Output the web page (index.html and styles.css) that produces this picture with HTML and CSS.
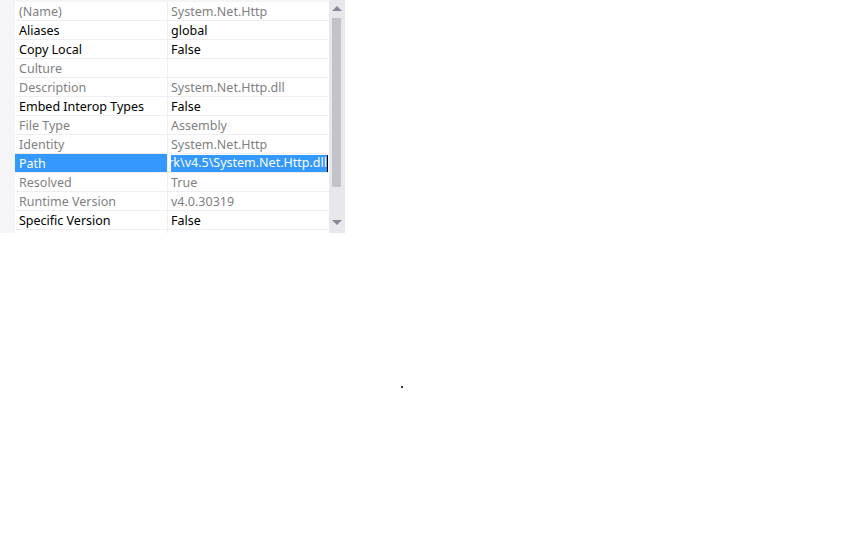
FILE: index.html
```html
<!DOCTYPE html>
<html lang="en">

<head>
    <meta charset="UTF-8">
    <title>Properties</title>
    <link rel="stylesheet" href="styles.css">
</head>

<body>
    <!-- Окно свойств ссылки -->
    <div class="panel">
        <div class="grid">
            <div class="row readonly"><div class="name">(Name)</div><div class="value">System.Net.Http</div></div>
            <div class="row"><div class="name">Aliases</div><div class="value">global</div></div>
            <div class="row"><div class="name">Copy Local</div><div class="value">False</div></div>
            <div class="row readonly"><div class="name">Culture</div><div class="value"></div></div>
            <div class="row readonly"><div class="name">Description</div><div class="value">System.Net.Http.dll</div></div>
            <div class="row"><div class="name">Embed Interop Types</div><div class="value">False</div></div>
            <div class="row readonly"><div class="name">File Type</div><div class="value">Assembly</div></div>
            <div class="row readonly"><div class="name">Identity</div><div class="value">System.Net.Http</div></div>
            <div class="row selected">
                <div class="name">Path</div>
                <div class="value editing">
                    <div class="clip"><span class="sel">Framework\v4.5\System.Net.Http.dll</span></div>
                </div>
            </div>
            <div class="row readonly"><div class="name">Resolved</div><div class="value">True</div></div>
            <div class="row readonly"><div class="name">Runtime Version</div><div class="value">v4.0.30319</div></div>
            <div class="row"><div class="name">Specific Version</div><div class="value">False</div></div>
            <div class="row"><div class="name"></div><div class="value"></div></div>
        </div>
        <div class="scrollbar">
            <div class="arrow up"></div>
            <div class="track"><div class="thumb"></div></div>
            <div class="arrow down"></div>
        </div>
    </div>
    <div class="dot"></div>
</body>

</html>
```

FILE: styles.css
```css
/* Окно свойств */
body {
    margin: 0;
    background-color: #fff;
    font-family: "Noto Sans", "Noto Sans CJK SC", sans-serif;
    font-size: 12.5px;
}

.panel {
    display: flex;
    width: 345px;
    height: 233px;
    background-color: #f5f5f7;
    overflow: hidden;
}

.grid {
    margin: 2px 0 0 15px;
    width: 314px;
    background-color: #fff;
}

.row {
    display: flex;
    height: 19px;
    border-bottom: 1px solid #eeeef2;
    box-sizing: border-box;
    color: #000;
}

.row.readonly {
    color: #7f7f7f;
}

.name,
.value {
    padding: 1px 0 0 4px;
    line-height: 18px;
    white-space: nowrap;
    overflow: hidden;
    box-sizing: border-box;
}

.name {
    width: 153px;
    border-right: 1px solid #eeeef2;
}

.value {
    flex: 1;
    padding-left: 3px;
}

.row.selected .name {
    background-color: #3399ff;
    color: #fff;
}

.value.editing {
    padding: 0 1px 1px 3px;
}

.clip {
    display: flex;
    justify-content: flex-end;
    overflow: hidden;
    height: 17px;
    padding-top: 1px;
    line-height: 16px;
}

.sel {
    background-color: #3399ff;
    color: #fff;
    border-right: 1px solid #000;
    flex-shrink: 0;
}

.scrollbar {
    display: flex;
    flex-direction: column;
    width: 16px;
    background-color: #e8e8ec;
}

.arrow {
    height: 17px;
    position: relative;
}

.arrow::after {
    content: "";
    position: absolute;
    left: 3px;
    border-left: 5px solid transparent;
    border-right: 5px solid transparent;
}

.arrow.up::after {
    top: 6px;
    border-bottom: 5px solid #868999;
}

.arrow.down::after {
    top: 4px;
    border-top: 5px solid #868999;
}

.track {
    flex: 1;
    padding: 1px 4px 0 3px;
}

.thumb {
    height: 169px;
    background-color: #c2c3c9;
}

.dot {
    position: absolute;
    left: 401px;
    top: 386px;
    width: 2px;
    height: 2px;
    background-color: #333;
}
```
